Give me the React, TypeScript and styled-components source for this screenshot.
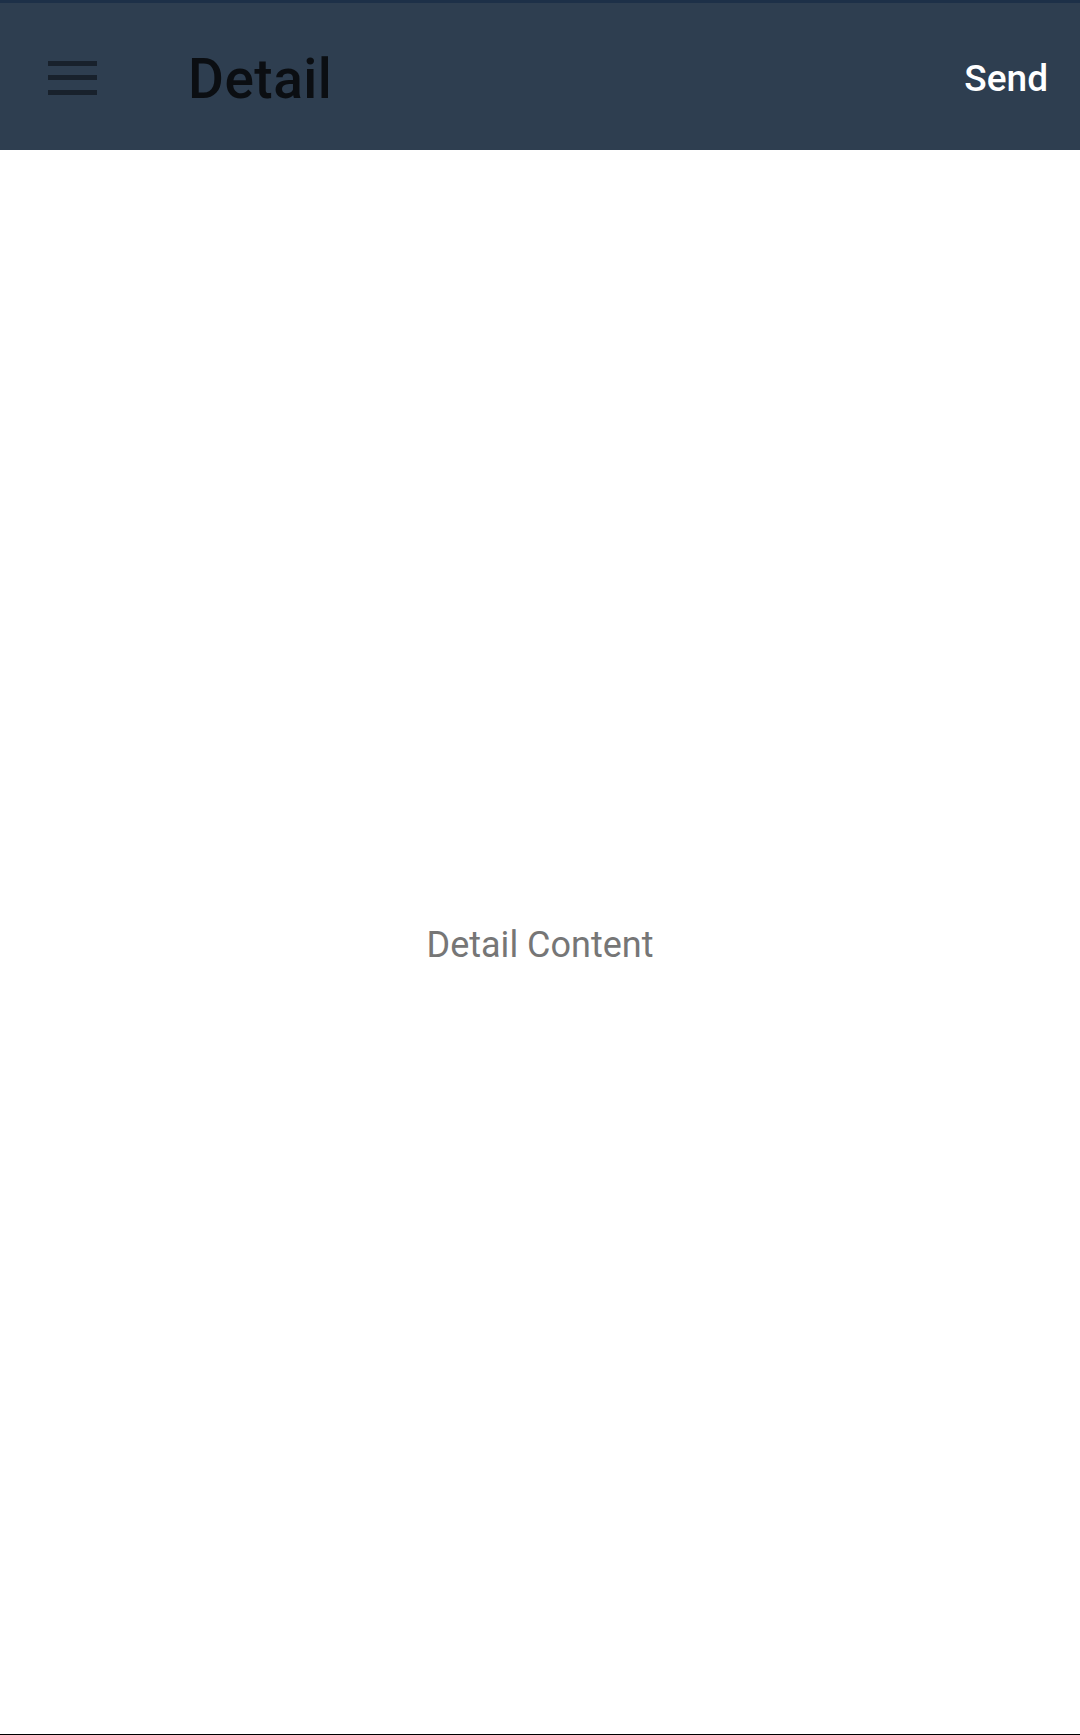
import React from "react";
import styled, { createGlobalStyle } from "styled-components";

const Global = createGlobalStyle`
  html, body { margin: 0; padding: 0; background: #ffffff; }
  body { font-family: Roboto, "Noto Sans", sans-serif; }
  #root { height: 1735px; }
`;

const Screen = styled.div`
  height: 1735px;
  display: flex;
  flex-direction: column;
  box-sizing: border-box;
  border-bottom: 1px solid #000000;
`;

const Toolbar = styled.header`
  height: 150px;
  box-sizing: border-box;
  background: #2e3e50;
  border-top: 3px solid #1d3048;
  display: flex;
  align-items: center;
  padding: 4px 32px 0 48px;
`;

const MenuButton = styled.button`
  width: 49px;
  height: 34px;
  padding: 0;
  border: 0;
  background: transparent;
  display: flex;
  flex-direction: column;
  justify-content: space-between;
  margin-top: -2px;
`;

const Bar = styled.span`
  display: block;
  height: 5px;
  background: #18212c;
`;

const Title = styled.h1`
  margin: 0 0 0 91px;
  font-family: Roboto, sans-serif;
  font-weight: 500;
  font-size: 55px;
  color: #0b0e12;
  letter-spacing: 0.5px;
  flex: 1;
`;

const Action = styled.button`
  border: 0;
  background: transparent;
  padding: 0;
  font-family: Roboto, sans-serif;
  font-weight: 500;
  font-size: 37px;
  color: #ffffff;
`;

const Content = styled.main`
  flex: 1;
  display: flex;
  align-items: center;
  justify-content: center;
  padding-top: 5px;
`;

const Placeholder = styled.p`
  margin: 0;
  font-family: Roboto, sans-serif;
  font-size: 36px;
  color: #767676;
`;

export default function App() {
  return (
    <>
      <Global />
      <Screen>
        <Toolbar>
          <MenuButton aria-label="menu">
            <Bar />
            <Bar />
            <Bar />
          </MenuButton>
          <Title>Detail</Title>
          <Action>Send</Action>
        </Toolbar>
        <Content>
          <Placeholder>Detail Content</Placeholder>
        </Content>
      </Screen>
    </>
  );
}
